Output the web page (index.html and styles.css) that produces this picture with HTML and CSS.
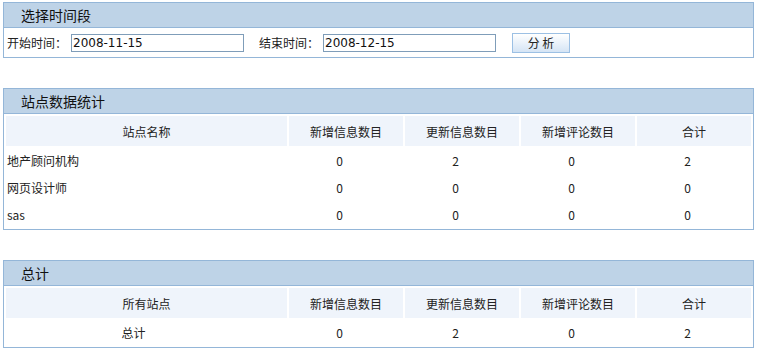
FILE: index.html
```html
<!DOCTYPE html>
<html lang="zh-CN">
<head>
  <meta charset="UTF-8" />
  <title>站点数据统计</title>
  <link rel="stylesheet" href="styles.css">
</head>
<body>
  <div class="panel">
    <div class="panel-title">选择时间段</div>
    <form class="range-form">
      <label>开始时间：</label>
      <input type="text" class="date-input" value="2008-11-15">
      <label class="end-label">结束时间：</label>
      <input type="text" class="date-input" value="2008-12-15">
      <button type="button" class="analyze-btn">分 析</button>
    </form>
  </div>

  <div class="panel">
    <div class="panel-title">站点数据统计</div>
    <table class="stat-table">
      <colgroup>
        <col class="col-name"><col><col><col><col>
      </colgroup>
      <tr>
        <th>站点名称</th>
        <th>新增信息数目</th>
        <th>更新信息数目</th>
        <th>新增评论数目</th>
        <th>合计</th>
      </tr>
      <tr><td class="site">地产顾问机构</td><td>0</td><td>2</td><td>0</td><td>2</td></tr>
      <tr><td class="site">网页设计师</td><td>0</td><td>0</td><td>0</td><td>0</td></tr>
      <tr><td class="site">sas</td><td>0</td><td>0</td><td>0</td><td>0</td></tr>
    </table>
  </div>

  <div class="panel">
    <div class="panel-title">总计</div>
    <table class="stat-table">
      <colgroup>
        <col class="col-name"><col><col><col><col>
      </colgroup>
      <tr>
        <th>所有站点</th>
        <th>新增信息数目</th>
        <th>更新信息数目</th>
        <th>新增评论数目</th>
        <th>合计</th>
      </tr>
      <tr><td class="total">总计</td><td>0</td><td>2</td><td>0</td><td>2</td></tr>
    </table>
  </div>
</body>
</html>
```

FILE: styles.css
```css
body {
  font-family: "SimSun", "Noto Sans CJK SC", "DejaVu Sans", sans-serif;
  font-size: 12px;
  color: #222;
  background-color: #fff;
  margin: 2px 4px 0 3px;
}
.panel {
  border: 1px solid #94b6d8;
  margin-bottom: 30px;
}
.panel:last-child {
  margin-bottom: 0;
}
.panel-title {
  height: 24px;
  line-height: 24px;
  background-color: #bed3e7;
  border-bottom: 1px solid #94b6d8;
  padding-left: 17px;
  font-size: 14px;
  color: #111;
}
.range-form {
  display: flex;
  align-items: center;
  height: 29px;
  margin: 0;
  padding-left: 3px;
}
.range-form label {
  width: 64px;
}
.range-form .end-label {
  margin-left: 15px;
}
.date-input {
  box-sizing: border-box;
  width: 173px;
  height: 18px;
  border: 1px solid #7f9db9;
  padding: 0 1px;
  font-family: "DejaVu Sans", sans-serif;
  font-size: 12px;
  color: #111;
  outline: none;
}
.analyze-btn {
  box-sizing: border-box;
  margin-left: 16px;
  width: 58px;
  height: 20px;
  border: 1px solid #9cc0e4;
  background: linear-gradient(#ffffff, #d5e4f5);
  font-family: inherit;
  font-size: 12px;
  color: #222;
  padding: 0;
}
.stat-table {
  width: 100%;
  border-collapse: separate;
  border-spacing: 2px;
  table-layout: fixed;
}
.col-name {
  width: 281px;
}
.stat-table th {
  height: 30px;
  padding: 0;
  background-color: #eff4fb;
  font-weight: normal;
  text-align: center;
}
.stat-table td {
  height: 25px;
  padding: 0 13px 0 0;
  text-align: center;
}
.stat-table td.site {
  text-align: left;
  padding: 0 0 0 1px;
}
.stat-table td.total {
  padding-right: 26px;
}
```
